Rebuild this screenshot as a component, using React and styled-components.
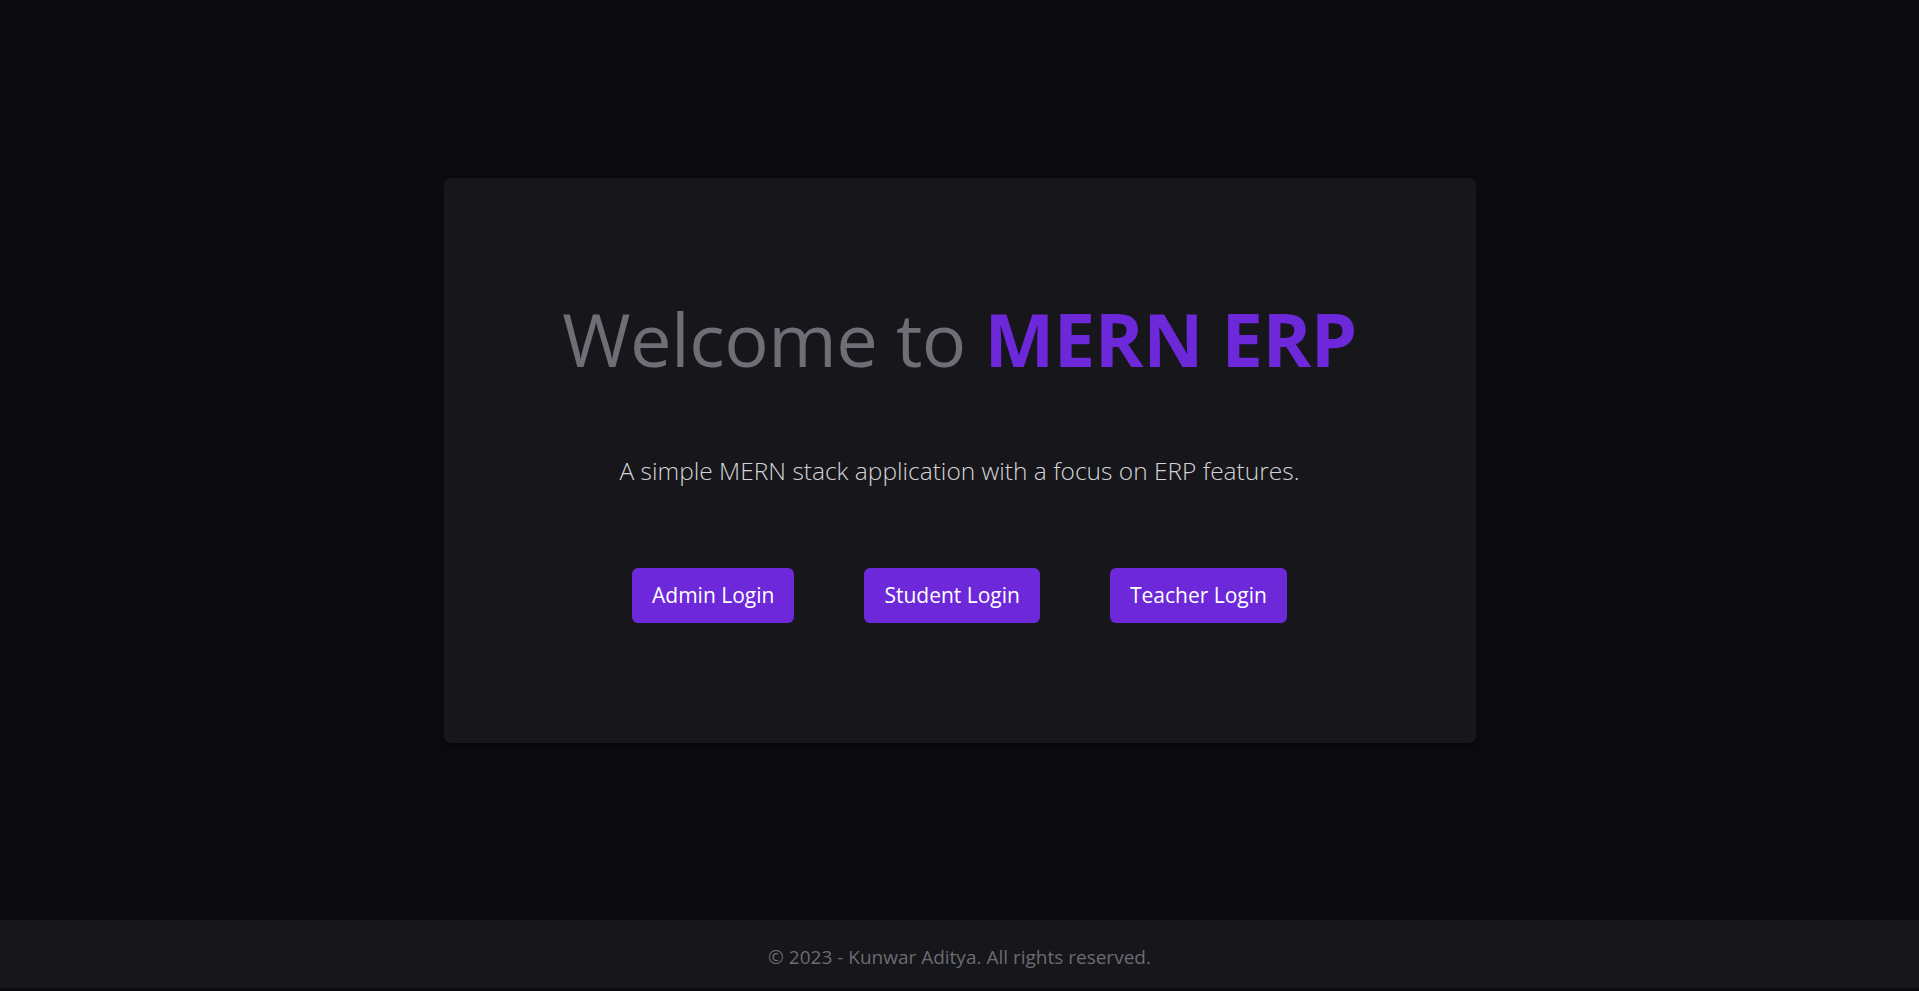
import React from "react";
import styled, { createGlobalStyle } from "styled-components";

const Global = createGlobalStyle`
  html, body { margin: 0; padding: 0; background: #0c0c0f; }
  body { font-family: "Open Sans", "Noto Sans", sans-serif; }
  * { box-sizing: border-box; }
`;

const Page = styled.div`
  min-height: 100vh;
  display: flex;
  flex-direction: column;
  background: #0c0c0f;
`;

const Main = styled.main`
  height: 920px;
  display: flex;
  align-items: center;
  justify-content: center;
`;

const Card = styled.section`
  width: 1032px;
  height: 565px;
  background: #16161b;
  border-radius: 6px;
  box-shadow: 0 4px 8px rgba(0, 0, 0, 0.35);
  display: flex;
  flex-direction: column;
  align-items: center;
  padding-top: 116px;
`;

const Title = styled.h1`
  margin: 0;
  font-size: 74px;
  line-height: 90px;
  font-weight: 400;
  color: #6e6e76;
  letter-spacing: -0.5px;
`;

const Brand = styled.span`
  font-weight: 700;
  color: #6d28d9;
`;

const Subtitle = styled.p`
  margin: 70px 0 0;
  font-size: 24.5px;
  line-height: 34px;
  font-weight: 300;
  color: #d4d4d8;
`;

const Actions = styled.div`
  display: flex;
  gap: 70px;
  margin-top: 80px;
`;

const Button = styled.button`
  height: 55px;
  padding: 0 20px;
  border: none;
  border-radius: 6px;
  background: #6d28d9;
  color: #ffffff;
  font-family: inherit;
  font-size: 21px;
  cursor: pointer;
`;

const Footer = styled.footer`
  height: 68px;
  padding-top: 5px;
  background: #16161b;
  display: flex;
  align-items: center;
  justify-content: center;
  color: #6b6b72;
  font-size: 19px;
`;

export default function App() {
  return (
    <Page>
      <Global />
      <Main>
        <Card>
          <Title>
            Welcome to <Brand>MERN ERP</Brand>
          </Title>
          <Subtitle>A simple MERN stack application with a focus on ERP features.</Subtitle>
          <Actions>
            <Button>Admin Login</Button>
            <Button>Student Login</Button>
            <Button>Teacher Login</Button>
          </Actions>
        </Card>
      </Main>
      <Footer>© 2023 - Kunwar Aditya. All rights reserved.</Footer>
    </Page>
  );
}
